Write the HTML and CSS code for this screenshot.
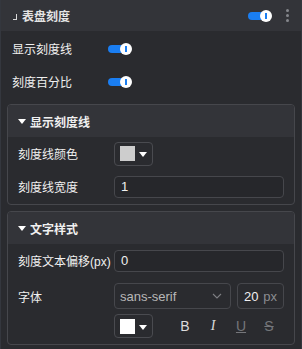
FILE: index.html
```html
<!DOCTYPE html>
<html lang="zh-CN">
<head>
    <meta charset="UTF-8">
    <meta name="viewport" content="width=device-width, initial-scale=1.0">
    <title>表盘刻度</title>
    <link rel="stylesheet" href="styles.css">
</head>
<body>

    <div class="panel">
        <div class="panel-head">
            <span class="corner"></span>
            <span class="panel-title">表盘刻度</span>
            <span class="switch"></span>
            <span class="kebab"><i></i><i></i><i></i></span>
        </div>

        <div class="rows">
            <div class="row">
                <span class="label">显示刻度线</span>
                <span class="switch"></span>
            </div>
            <div class="row">
                <span class="label">刻度百分比</span>
                <span class="switch"></span>
            </div>
        </div>

        <div class="card">
            <div class="card-head"><span class="caret"></span>显示刻度线</div>
            <div class="card-body">
                <div class="row">
                    <span class="label">刻度线颜色</span>
                    <span class="color-btn"><span class="swatch grey"></span><span class="caret"></span></span>
                </div>
                <div class="row">
                    <span class="label">刻度线宽度</span>
                    <span class="input">1</span>
                </div>
            </div>
        </div>

        <div class="card">
            <div class="card-head"><span class="caret"></span>文字样式</div>
            <div class="card-body">
                <div class="row">
                    <span class="label">刻度文本偏移(px)</span>
                    <span class="input">0</span>
                </div>
                <div class="row font-row">
                    <span class="label">字体</span>
                    <span class="select">sans-serif
                        <svg class="chevron" width="10" height="6" viewBox="0 0 10 6"><path d="M1 1l4 4 4-4" fill="none" stroke="#7d7e82" stroke-width="1.1"/></svg>
                    </span>
                    <span class="size"><span class="num">20</span><span class="unit">px</span></span>
                </div>
                <div class="row style-row">
                    <span class="label"></span>
                    <span class="color-btn"><span class="swatch white"></span><span class="caret"></span></span>
                    <span class="fmt first">B</span>
                    <span class="fmt italic">I</span>
                    <span class="fmt under off">U</span>
                    <span class="fmt strike off">S</span>
                </div>
            </div>
        </div>
    </div>

</body>
</html>
```

FILE: styles.css
```css
* {
    box-sizing: border-box;
}
body {
    margin: 0;
    background-color: #2a2b2f;
    font-family: "Liberation Sans", "Noto Sans CJK SC", sans-serif;
    font-size: 12px;
    color: #f0f0f0;
}
.panel {
    height: 349px;
    border-left: 1px solid #34373e;
    border-right: 1px solid #34373e;
}
.panel-head {
    height: 31px;
    display: flex;
    align-items: center;
    padding: 0 11px;
    background: #333439;
}
.corner {
    width: 4px;
    height: 6px;
    border-right: 1.5px solid #d8d8d8;
    border-bottom: 1.5px solid #d8d8d8;
    margin: 2px 5px 0 1px;
}
.panel-title {
    font-weight: bold;
    flex: 1;
    color: #e4e4e4;
}
.switch {
    position: relative;
    display: inline-block;
    width: 24px;
    height: 12px;
}
.switch::before {
    content: "";
    position: absolute;
    left: 0;
    top: 2px;
    width: 20px;
    height: 8px;
    border-radius: 4px;
    background: #1a7ef2;
}
.switch::after {
    content: "";
    position: absolute;
    right: 0;
    top: 0;
    width: 12px;
    height: 12px;
    border-radius: 50%;
    background: #fff linear-gradient(#1a7ef2, #1a7ef2) no-repeat center / 2px 6px;
}
.kebab {
    display: flex;
    flex-direction: column;
    gap: 2px;
    margin-left: 14px;
    width: 4px;
}
.kebab i {
    width: 3px;
    height: 3px;
    border-radius: 50%;
    background: #85878c;
}
.rows {
    padding: 1px 0 6px 11px;
}
.row {
    height: 33px;
    display: flex;
    align-items: center;
}
.label {
    width: 96px;
    flex: none;
    white-space: nowrap;
}
.card {
    margin: 0 6px 6px 6px;
    border: 1px solid #46474c;
    border-radius: 4px;
    overflow: hidden;
}
.card-head {
    height: 32px;
    display: flex;
    align-items: center;
    padding-left: 10px;
    background: #333439;
    font-weight: bold;
}
.caret {
    width: 0;
    height: 0;
    border-left: 4px solid transparent;
    border-right: 4px solid transparent;
    border-top: 5px solid #fff;
    margin-right: 4px;
}
.card-body {
    padding: 0 10px 1px 10px;
}
.color-btn {
    width: 39px;
    height: 24px;
    border: 1px solid #4a4b50;
    border-radius: 4px;
    display: flex;
    align-items: center;
    padding-left: 5px;
    gap: 4px;
}
.color-btn .caret {
    margin: 2px 0 0 0;
}
.swatch {
    width: 15px;
    height: 15px;
}
.swatch.grey {
    background: #cdcdcd;
}
.swatch.white {
    background: #fff;
}
.input {
    flex: 1;
    height: 22px;
    border: 1px solid #46474c;
    border-radius: 4px;
    background: #26272b;
    display: flex;
    align-items: center;
    padding-left: 6px;
    font-size: 13px;
}
.font-row {
    height: 26px;
    margin-top: 6px;
}
.select {
    width: 117px;
    height: 26px;
    border: 1px solid #46474c;
    border-radius: 4px;
    display: flex;
    align-items: center;
    justify-content: space-between;
    padding: 0 8px 0 5px;
    color: #b8b8b8;
    font-size: 13px;
}
.size {
    margin-left: 6px;
    flex: 1;
    height: 26px;
    border: 1px solid #46474c;
    border-radius: 4px;
    display: flex;
    align-items: center;
    justify-content: space-between;
    padding: 0 6px 0 6px;
    font-size: 13px;
}
.unit {
    color: #8c8d91;
}
.style-row {
    height: 24px;
    margin: 5px 0 5px 0;
}
.fmt {
    width: 28px;
    text-align: center;
    font-size: 14px;
    color: #dcdcdc;
}
.first {
    margin-left: 18px;
}
.italic {
    font-family: "Liberation Serif", serif;
    font-style: italic;
}
.under {
    text-decoration: underline;
}
.strike {
    text-decoration: line-through;
}
.off {
    color: #75767a;
}
```
